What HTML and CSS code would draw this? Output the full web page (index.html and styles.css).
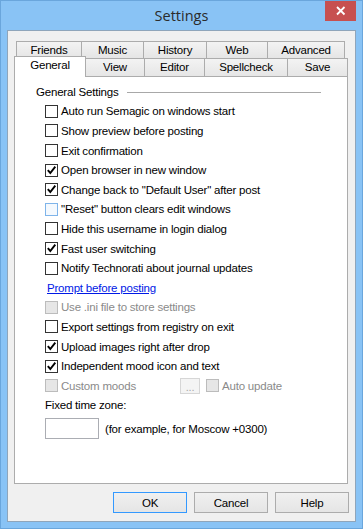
FILE: index.html
```html
<!DOCTYPE html>
<html lang="en">
  <head>
    <meta charset="utf-8" />
    <title>Settings</title>
    <link rel="stylesheet" href="styles.css">
  </head>
  <body>
    <div class="window">
      <div class="titlebar">
        <span></span>
        <span class="title">Settings</span>
        <span class="close">
          <svg width="31" height="20" viewBox="0 0 31 20">
            <path d="M12 6 L19.5 13.5 M19.5 6 L12 13.5" stroke="#fff" stroke-width="1.8" fill="none" />
          </svg>
        </span>
      </div>

      <div class="client">
        <div class="tabs">
          <div class="tab-row back">
            <div class="tab">Friends</div>
            <div class="tab">Music</div>
            <div class="tab">History</div>
            <div class="tab">Web</div>
            <div class="tab">Advanced</div>
          </div>
          <div class="tab-row front">
            <div class="tab selected">General</div>
            <div class="tab">View</div>
            <div class="tab">Editor</div>
            <div class="tab">Spellcheck</div>
            <div class="tab">Save</div>
          </div>
        </div>

        <div class="panel">
          <div class="group-title">General Settings</div>

          <div class="row"><span class="box"></span>Auto run Semagic on windows start</div>
          <div class="row"><span class="box"></span>Show preview before posting</div>
          <div class="row"><span class="box"></span>Exit confirmation</div>
          <div class="row"><span class="box checked"><svg width="11" height="11" viewBox="0 0 11 11"><path d="M1.8 5.2 L4.3 8 L9.3 1.6" stroke="#000" stroke-width="1.9" fill="none" /></svg></span>Open browser in new window</div>
          <div class="row"><span class="box checked"><svg width="11" height="11" viewBox="0 0 11 11"><path d="M1.8 5.2 L4.3 8 L9.3 1.6" stroke="#000" stroke-width="1.9" fill="none" /></svg></span>Change back to "Default User" after post</div>
          <div class="row"><span class="box hover"></span>"Reset" button clears edit windows</div>
          <div class="row"><span class="box"></span>Hide this username in login dialog</div>
          <div class="row"><span class="box checked"><svg width="11" height="11" viewBox="0 0 11 11"><path d="M1.8 5.2 L4.3 8 L9.3 1.6" stroke="#000" stroke-width="1.9" fill="none" /></svg></span>Fast user switching</div>
          <div class="row"><span class="box"></span>Notify Technorati about journal updates</div>
          <div class="row link-row"><a href="#" class="link">Prompt before posting</a></div>
          <div class="row disabled"><span class="box"></span>Use .ini file to store settings</div>
          <div class="row"><span class="box"></span>Export settings from registry on exit</div>
          <div class="row"><span class="box checked"><svg width="11" height="11" viewBox="0 0 11 11"><path d="M1.8 5.2 L4.3 8 L9.3 1.6" stroke="#000" stroke-width="1.9" fill="none" /></svg></span>Upload images right after drop</div>
          <div class="row"><span class="box checked"><svg width="11" height="11" viewBox="0 0 11 11"><path d="M1.8 5.2 L4.3 8 L9.3 1.6" stroke="#000" stroke-width="1.9" fill="none" /></svg></span>Independent mood icon and text</div>
          <div class="row disabled">
            <span class="box"></span>
            <span class="moods">Custom moods</span>
            <span class="dots">...</span>
            <span class="box"></span>Auto update
          </div>
          <div class="row">Fixed time zone:</div>
          <div class="zone-row">
            <div class="zone-input"></div>
            <span class="zone-hint">(for example, for Moscow +0300)</span>
          </div>
        </div>

        <div class="buttons">
          <button class="btn default">OK</button>
          <button class="btn">Cancel</button>
          <button class="btn">Help</button>
        </div>
      </div>
    </div>
  </body>
</html>
```

FILE: styles.css
```css
* {
  margin: 0;
  box-sizing: border-box;
}
body {
  font-family: "Liberation Sans", Arial, sans-serif;
  font-size: 11.5px;
  letter-spacing: -0.2px;
  color: #000;
  background: #fff;
}
.window {
  width: 363px;
  height: 529px;
  border: 1px solid #6aa6dc;
  background-color: #89c3f5;
  padding: 0 6px 6px 6px;
  display: flex;
  flex-direction: column;
}
.titlebar {
  height: 29px;
  display: grid;
  grid-template-columns: 1fr auto 1fr;
}
.title {
  font-family: "Open Sans", "Noto Sans", sans-serif;
  font-size: 14.5px;
  letter-spacing: 0;
  line-height: 30px;
  color: #2b2b2b;
}
.close {
  justify-self: end;
  width: 31px;
  height: 20px;
  background-color: #c75050;
  display: flex;
}
.client {
  flex: 1;
  border: 1px solid #8fa5ba;
  background-color: #f0f0f0;
  display: flex;
  flex-direction: column;
}

/* tabs */
.tabs {
  padding-top: 10px;
}
.tab-row {
  display: grid;
}
.tab-row.back {
  height: 17px;
  margin-left: 8px;
  grid-template-columns: 65px 62px 63px 61px 78px;
}
.tab-row.front {
  height: 18px;
  margin-left: 6px;
  grid-template-columns: 71px 59px 60px 83px 61px;
}
.tab {
  border: 1px solid #acacac;
  border-bottom: none;
  margin-right: -1px;
  background: linear-gradient(#f3f3f3, #e5e5e5);
  text-align: center;
  line-height: 16px;
  white-space: nowrap;
}
.tab:last-child {
  margin-right: 0;
}
.front .tab {
  line-height: 17px;
}
.front .tab.selected {
  background: #fff;
  margin-top: -2px;
  height: 21px;
  line-height: 16px;
  position: relative;
  z-index: 1;
}

/* panel */
.panel {
  height: 408px;
  margin: 0 7px 0 6px;
  border: 1px solid #acacac;
  background-color: #fff;
  padding-top: 5px;
}
.group-title {
  display: flex;
  align-items: center;
  height: 19.6px;
  padding: 0 26px 0 21px;
}
.group-title::after {
  content: "";
  flex: 1;
  border-top: 1px solid #a8a8a8;
  margin: 2px 0 0 9px;
}
.row {
  display: flex;
  align-items: center;
  height: 19.6px;
  padding-left: 30px;
  white-space: nowrap;
}
.box {
  flex: none;
  width: 13px;
  height: 13px;
  border: 1px solid #333;
  background-color: #fff;
  margin-right: 3px;
  display: flex;
}
.box.hover {
  border-color: #7eb4ea;
  background-color: #f4f9fe;
}
.link-row {
  padding-left: 32px;
}
.link {
  color: #0019e6;
}
.disabled {
  color: #8a8a8a;
}
.disabled .box {
  border-color: #bcbcbc;
  background-color: #e6e6e6;
}
.moods {
  width: 119px;
}
.dots {
  width: 20px;
  height: 16px;
  border: 1px solid #d6d6d6;
  background-color: #f4f4f4;
  color: #a8a8a8;
  font-size: 11px;
  line-height: 17px;
  text-align: center;
  margin-right: 6px;
}
.zone-row {
  display: flex;
  align-items: center;
  margin-top: 3px;
  padding-left: 30px;
}
.zone-input {
  width: 54px;
  height: 21px;
  border: 1px solid #abadb3;
  background-color: #fff;
}
.zone-hint {
  margin-left: 6px;
}

/* buttons */
.buttons {
  display: flex;
  justify-content: flex-end;
  gap: 7px;
  margin-top: 8px;
  padding-right: 6px;
}
.btn {
  width: 74px;
  height: 21px;
  border: 1px solid #acacac;
  background: linear-gradient(#f0f0f0, #e5e5e5);
  font-family: inherit;
  font-size: 11.5px;
  letter-spacing: -0.2px;
  color: #000;
  padding: 0;
}
.btn.default {
  border-color: #3399ff;
}
```
